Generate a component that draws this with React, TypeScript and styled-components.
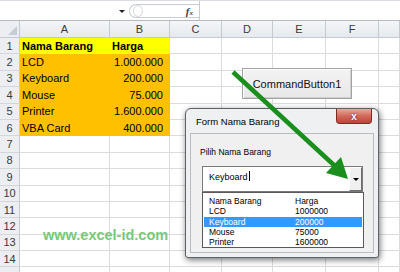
import styled, { createGlobalStyle } from 'styled-components';

const GlobalStyle = createGlobalStyle`
    html, body {
        margin: 0;
        padding: 0;
        background: #fff;
    }
`

const Page = styled.div`
    position: relative;
    width: 400px;
    height: 272px;
    overflow: hidden;
    background: #fff;
    font-family: "Liberation Sans", Arial, sans-serif;
`

const FormulaBar = styled.div`
    height: 19px;
    display: flex;
    align-items: center;
    border-top: 1px solid #d9dce0;
    border-bottom: 1px solid #b4bac2;
    box-sizing: content-box;
    .namebox{
        width: 129px;
        height: 100%;
        position: relative;
        >span{
            position: absolute;
            left: 119px;
            top: 9px;
            border-left: 3px solid transparent;
            border-right: 3px solid transparent;
            border-top: 3px solid #222;
        }
    }
    .capsule{
        width: 70px;
        height: 14px;
        border: 1px solid #c9cdd3;
        border-right: none;
        border-radius: 8px 0 0 8px;
        display: flex;
        align-items: center;
        justify-content: space-between;
        padding-left: 3px;
        box-sizing: border-box;
        >.dot{
            width: 8px;
            height: 10px;
            border-radius: 50%;
            border: 1px solid #d6d9dd;
        }
        >.fx{
            font-family: "Liberation Serif", serif;
            font-style: italic;
            font-weight: bold;
            font-size: 11px;
            color: #444;
            margin-right: 6px;
            >small{
                font-size: 7px;
            }
        }
    }
    .input{
        flex: 1;
        height: 100%;
        border-left: 1px solid #c9cdd3;
    }
`

const Sheet = styled.div`
    display: grid;
    grid-template-columns: 20px 90px 60px 52px 51px 53px 53px 21px;
    grid-template-rows: 17px;
    grid-auto-rows: 16.4px;
`

const Corner = styled.div`
    background: #eceef1;
    border-right: 1px solid #c5cad1;
    border-bottom: 1px solid #c5cad1;
    position: relative;
    &::after{
        content: '';
        position: absolute;
        right: 2px;
        bottom: 2px;
        border-left: 9px solid transparent;
        border-bottom: 9px solid #c7ccd2;
    }
`

const ColHead = styled.div`
    background: linear-gradient(#f4f6f8, #e6e9ed);
    border-right: 1px solid #c5cad1;
    border-bottom: 1px solid #c5cad1;
    font-size: 11px;
    color: #3a3a3a;
    display: flex;
    align-items: center;
    justify-content: center;
`

const RowHead = styled.div`
    background: #eceef1;
    border-right: 1px solid #c5cad1;
    border-bottom: 1px solid #d3d7dc;
    font-size: 11px;
    color: #3a3a3a;
    display: flex;
    align-items: center;
    justify-content: center;
`

const Cell = styled.div<{ $fill?: string; $bold?: boolean; $right?: boolean }>`
    background: ${p => p.$fill || '#fff'};
    border-right: 1px solid ${p => p.$fill || '#dadcdd'};
    border-bottom: 1px solid ${p => p.$fill || '#dadcdd'};
    font-size: 11px;
    font-weight: ${p => p.$bold ? 'bold' : 'normal'};
    color: #000;
    display: flex;
    align-items: center;
    justify-content: ${p => p.$right ? 'flex-end' : 'flex-start'};
    padding: 0 ${p => p.$right ? '6px' : '2px'};
    white-space: nowrap;
    overflow: hidden;
    box-sizing: border-box;
`

const CommandButton = styled.div`
    position: absolute;
    left: 242px;
    top: 68px;
    width: 110px;
    height: 31px;
    box-sizing: border-box;
    background: linear-gradient(#f3f3f3, #e8e8e8);
    border: 1px solid #a3a3a3;
    box-shadow: inset 1px 1px #fff, inset -1px -1px #cfcfcf;
    font-size: 11px;
    color: #111;
    display: flex;
    align-items: center;
    justify-content: center;
`

const Watermark = styled.div`
    position: absolute;
    left: 43px;
    top: 227px;
    font-family: "Liberation Sans", Arial, sans-serif;
    font-weight: bold;
    font-size: 14.5px;
    color: #79c879;
`

const Dialog = styled.div`
    position: absolute;
    left: 185px;
    top: 108px;
    width: 194px;
    height: 150px;
    box-sizing: border-box;
    background: #eef0f2;
    border: 1px solid #5e6166;
    border-radius: 6px 6px 3px 3px;
    box-shadow: 1px 2px 6px rgba(0, 0, 0, 0.55);
    display: flex;
    flex-direction: column;
`

const TitleBar = styled.div`
    height: 24px;
    position: relative;
    display: flex;
    align-items: center;
    padding-left: 10px;
    font-size: 9.5px;
    color: #000;
`

const CloseButton = styled.div`
    position: absolute;
    right: 6px;
    top: 0;
    width: 36px;
    height: 15px;
    box-sizing: border-box;
    border: 1px solid #7e2a22;
    border-top: none;
    border-radius: 0 0 4px 4px;
    background: linear-gradient(#e8a89c, #d06a5c 50%, #c0443a);
    color: #fff;
    font-weight: bold;
    font-size: 10px;
    display: flex;
    align-items: center;
    justify-content: center;
    text-shadow: 0 0 2px #6a1a14;
`

const Client = styled.div`
    flex: 1;
    margin: 0 4px 4px;
    background: #f0f0f0;
    border: 1px solid #b8bbbf;
    padding: 13px 0 0 11px;
    display: flex;
    flex-direction: column;
    align-items: flex-start;
    .label{
        font-size: 8.5px;
        color: #000;
        margin-left: -2px;
        margin-bottom: 9px;
    }
`

const Combo = styled.div`
    width: 161px;
    height: 26px;
    box-sizing: border-box;
    background: #fff;
    border: 1px solid #7a7a7a;
    display: flex;
    >.text{
        flex: 1;
        font-size: 9px;
        padding: 4px 0 0 6px;
        >i{
            display: inline-block;
            width: 1px;
            height: 10px;
            background: #000;
            vertical-align: -1px;
            margin-left: 1px;
        }
    }
`

const DropButton = styled.div`
    width: 13px;
    box-sizing: border-box;
    background: #f0f0f0;
    border-top: 1px solid #fff;
    border-left: 1px solid #fff;
    border-right: 1px solid #6e6e6e;
    border-bottom: 1px solid #6e6e6e;
    display: flex;
    align-items: center;
    justify-content: center;
    >span{
        border-left: 3px solid transparent;
        border-right: 3px solid transparent;
        border-top: 3px solid #000;
    }
`

const List = styled.div`
    width: 162px;
    height: 56px;
    box-sizing: border-box;
    background: #fff;
    border: 1px solid #5a5a5a;
    padding: 3px 1px 0;
`

const ListRow = styled.div<{ $selected?: boolean }>`
    height: 10.25px;
    display: grid;
    grid-template-columns: 86px 1fr;
    align-items: center;
    font-size: 8.5px;
    padding-left: 5px;
    background: ${p => p.$selected ? '#3399ff' : 'transparent'};
    color: ${p => p.$selected ? '#fff' : '#000'};
`

const Arrow = styled.svg`
    position: absolute;
    left: 0;
    top: 0;
    pointer-events: none;
`

const barang = [
    ['LCD', '1.000.000'],
    ['Keyboard', '200.000'],
    ['Mouse', '75.000'],
    ['Printer', '1.600.000'],
    ['VBA Card', '400.000'],
];

const listRows = [
    ['LCD', '1000000'],
    ['Keyboard', '200000'],
    ['Mouse', '75000'],
    ['Printer', '1600000'],
];

const cols = ['A', 'B', 'C', 'D', 'E', 'F', ''];

const App = () => {
    const rows = [];
    // row 15 only peeks in at the bottom edge, so its number is left out
    for (let r = 1; r <= 15; r++) {
        let a = '', b = '', fill: string | undefined;
        let bold = false;
        if (r === 1) { a = 'Nama Barang'; b = 'Harga'; fill = '#ffff00'; bold = true; }
        else if (r <= 6) { a = barang[r - 2][0]; b = barang[r - 2][1]; fill = '#ffc000'; }
        rows.push(
            <RowHead key={'h' + r}>{r < 15 ? r : ''}</RowHead>,
            <Cell key={'a' + r} $fill={fill} $bold={bold}>{a}</Cell>,
            <Cell key={'b' + r} $fill={fill} $bold={bold} $right={r > 1}>{b}</Cell>,
            <Cell key={'c' + r} />,
            <Cell key={'d' + r} />,
            <Cell key={'e' + r} />,
            <Cell key={'f' + r} />,
            <Cell key={'g' + r} />,
        );
    }

    return (
        <Page>
            <GlobalStyle />
            <FormulaBar>
                <div className='namebox'><span /></div>
                <div className='capsule'>
                    <div className='dot' />
                    <div className='fx'>f<small>x</small></div>
                </div>
                <div className='input' />
            </FormulaBar>
            <Sheet>
                <Corner />
                {cols.map((c, i) => <ColHead key={i}>{c}</ColHead>)}
                {rows}
            </Sheet>

            <Watermark>www.excel-id.com</Watermark>

            <CommandButton>CommandButton1</CommandButton>

            <Dialog>
                <TitleBar>
                    Form Nama Barang
                    <CloseButton>x</CloseButton>
                </TitleBar>
                <Client>
                    <div className='label'>Pilih Nama Barang</div>
                    <Combo>
                        <div className='text'>Keyboard<i /></div>
                        <DropButton><span /></DropButton>
                    </Combo>
                    <List>
                        <ListRow><span>Nama Barang</span><span>Harga</span></ListRow>
                        {listRows.map(([n, h]) => (
                            <ListRow key={n} $selected={n === 'Keyboard'}>
                                <span>{n}</span><span>{h}</span>
                            </ListRow>
                        ))}
                    </List>
                </Client>
            </Dialog>

            <Arrow width={400} height={272} viewBox='0 0 400 272'>
                <line x1={233} y1={72} x2={336} y2={167} stroke='#1a8f1e' strokeWidth={4.5} />
                <polygon points='348,179 326,173 341,157' fill='#1a8f1e' />
            </Arrow>
        </Page>
    );
}

export default App;
